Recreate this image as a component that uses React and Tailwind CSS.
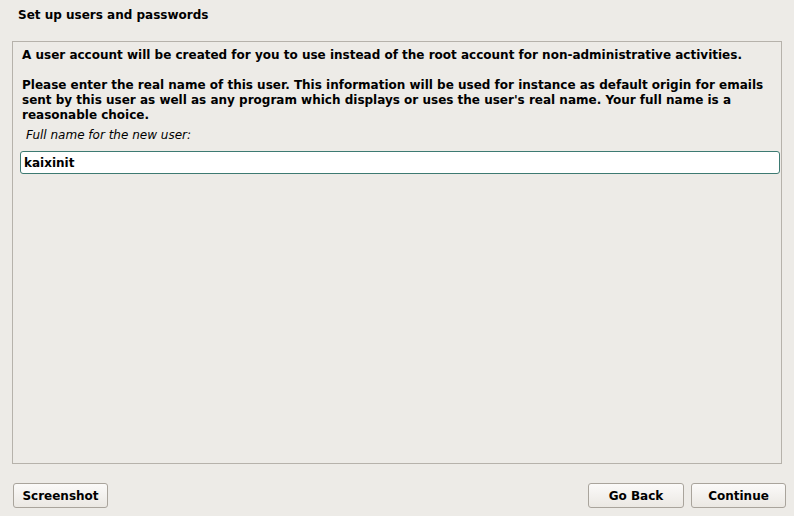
export default function App() {
  return (
    <div className="flex h-[516px] w-[794px] flex-col bg-[#edebe7] font-['DejaVu_Sans',sans-serif] text-[12px] text-black">
      <div className="pl-[18px] pt-[8px] font-bold leading-[15px]">Set up users and passwords</div>

      <div className="mx-[12px] mt-[18px] h-[423px] border border-[#b6b2ab] px-[7px] pt-[6px]">
        <p className="pl-[2px] font-bold leading-[15px]">
          A user account will be created for you to use instead of the root account for non-administrative activities.
        </p>
        <p className="mt-[15px] pl-[2px] font-bold leading-[15px]">
          Please enter the real name of this user. This information will be used for instance as default origin for emails sent by this user as well as any program which displays or uses the user's real name. Your full name is a reasonable choice.
        </p>
        <div className="mt-[5px] pl-[6px] italic leading-[15px]">Full name for the new user:</div>
        <input
          defaultValue="kaixinit"
          className="mt-[8px] h-[23px] w-[760px] rounded-[3px] border border-[#3d7a72] bg-white px-[3px] font-bold outline-none"
        />
      </div>

      <div className="ml-[13px] mr-[8px] mt-[19px] flex items-center">
        <button className="h-[25px] w-[95px] rounded-[3px] border border-[#a9a49c] bg-gradient-to-b from-[#fbfaf9] to-[#ebe8e3] font-bold">Screenshot</button>
        <div className="flex-1" />
        <button className="h-[25px] w-[96px] rounded-[3px] border border-[#a9a49c] bg-gradient-to-b from-[#fbfaf9] to-[#ebe8e3] font-bold">Go Back</button>
        <button className="ml-[7px] h-[25px] w-[95px] rounded-[3px] border border-[#a9a49c] bg-gradient-to-b from-[#fbfaf9] to-[#ebe8e3] font-bold">Continue</button>
      </div>
    </div>
  );
}
